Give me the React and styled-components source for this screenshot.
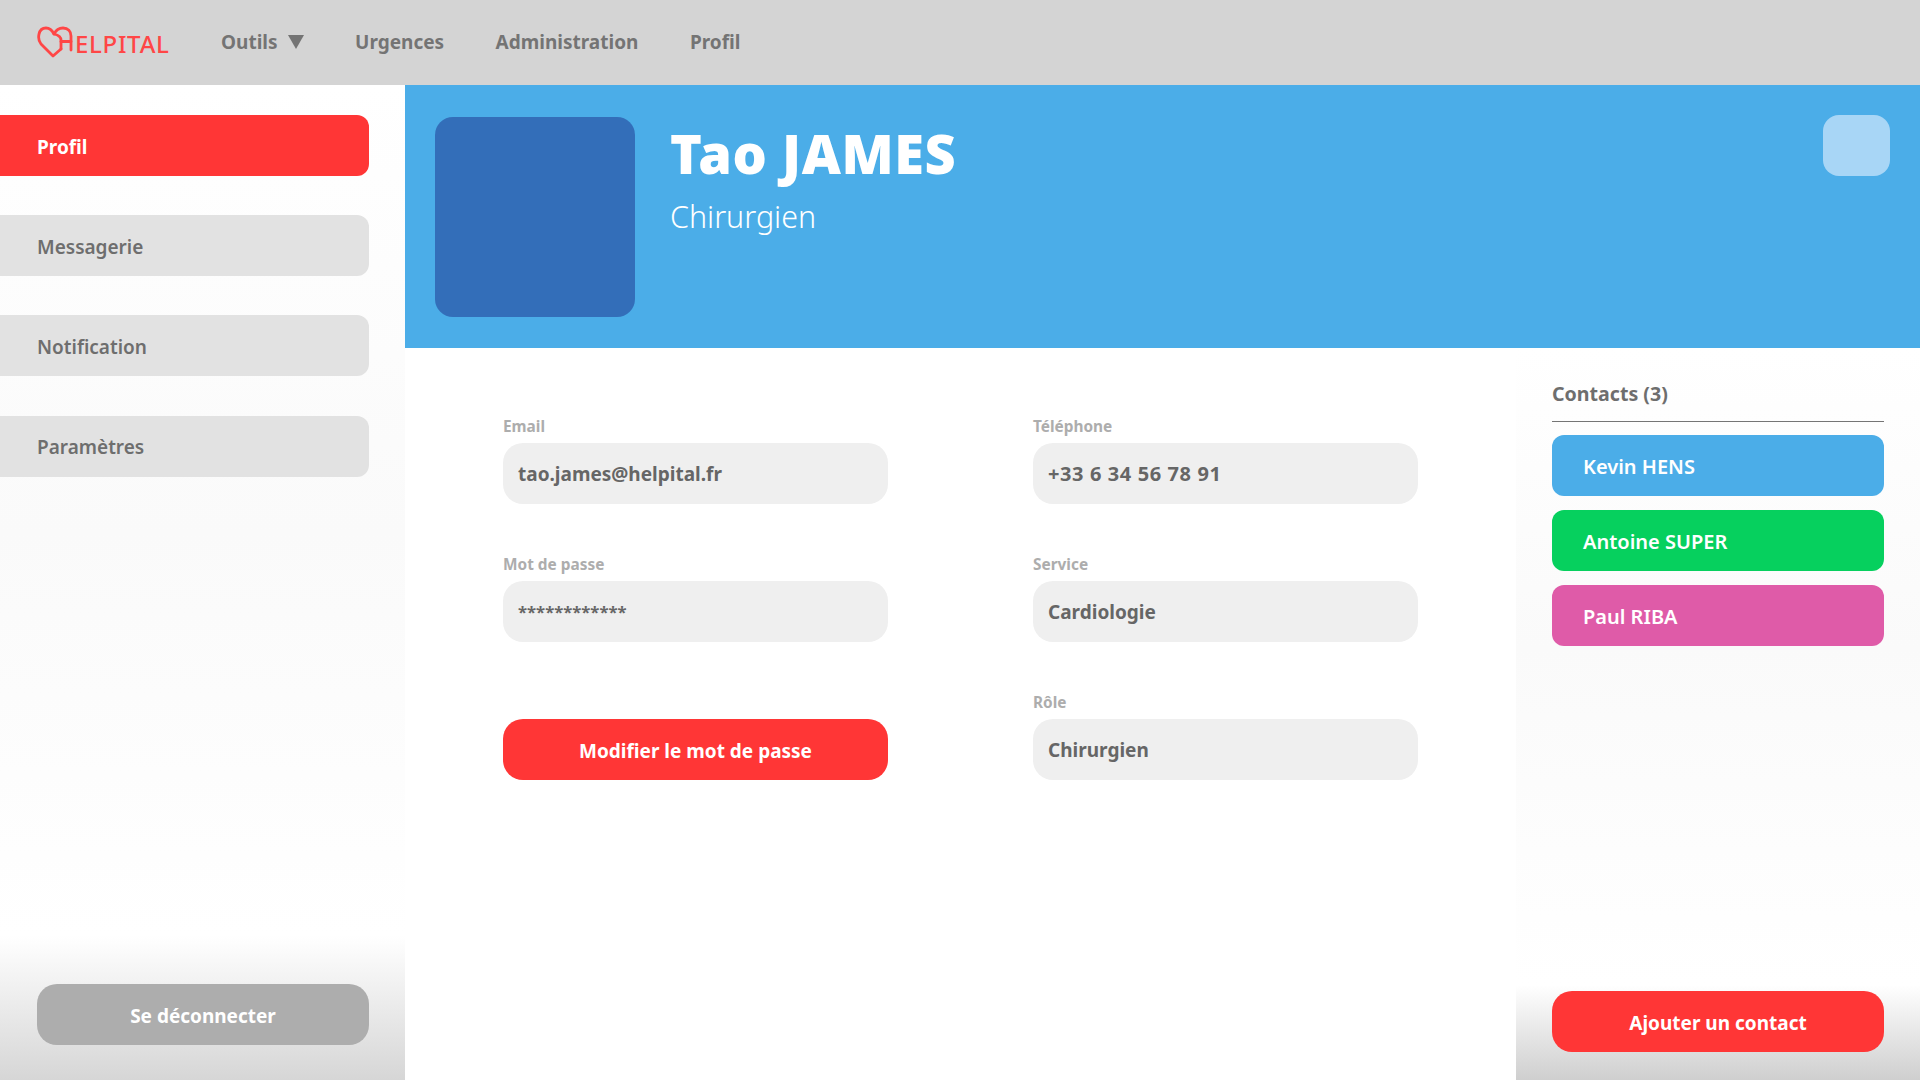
import React from 'react'
import styled, { createGlobalStyle } from 'styled-components'

const GlobalStyle = createGlobalStyle`
  html, body {
    margin: 0;
    padding: 0;
    background: #fff;
    font-family: "Noto Sans", "Open Sans", sans-serif;
  }
  * { box-sizing: border-box; }
`

const Page = styled.div`
  width: 1920px;
  height: 1080px;
  overflow: hidden;
  display: flex;
  flex-direction: column;
`

const Navbar = styled.header`
  height: 85px;
  flex: none;
  background: #d4d4d4;
  display: flex;
  align-items: center;
  padding-left: 37px;
`

const Logo = styled.div`
  width: 184px;
  display: flex;
  align-items: center;
  color: #ff4646;
  font-size: 24px;
  font-weight: 500;
  line-height: 1;
  letter-spacing: 0.7px;
`

const HeartMark = styled.svg`
  width: 36px;
  height: 32px;
  flex: none;
  margin-top: -2px;
`

const LogoText = styled.span`
  margin-top: 2px;
  margin-left: 2px;
`

const NavList = styled.nav`
  display: flex;
  align-items: center;
  gap: 51.5px;
  padding-bottom: 2px;
`

const NavLink = styled.span`
  display: flex;
  align-items: center;
  gap: 10px;
  color: #747474;
  font-size: 19px;
  font-weight: 700;
`

const Caret = styled.span`
  width: 0;
  height: 0;
  border-left: 8px solid transparent;
  border-right: 8px solid transparent;
  border-top: 14px solid #747474;
`

const Body = styled.div`
  flex: 1;
  display: flex;
  min-height: 0;
`

const Sidebar = styled.aside`
  width: 405px;
  flex: none;
  padding: 30px 36px 35px 0;
  display: flex;
  flex-direction: column;
  justify-content: space-between;
  background: linear-gradient(#ffffff 0, #fafafa 45%, #ffffff 85.5%, #d6d6d6 100%);
`

const SideMenu = styled.div`
  display: flex;
  flex-direction: column;
  gap: 39.2px;
`

const SideItem = styled.div`
  height: 61px;
  padding: 2px 0 0 37px;
  display: flex;
  align-items: center;
  border-radius: 0 12px 12px 0;
  font-size: 19px;
  font-weight: ${p => (p.$active ? 700 : 600)};
  color: ${p => (p.$active ? '#fff' : '#6e6e6e')};
  background: ${p => (p.$active ? '#ff3636' : '#e2e2e2')};
`

const PillButton = styled.button`
  width: 100%;
  height: 61px;
  padding: 2px 0 0;
  border: 0;
  border-radius: 20px;
  font-family: inherit;
  font-size: 19px;
  font-weight: 700;
  color: #fff;
  background: ${p => p.$color || '#ff3636'};
`

const LogoutRow = styled.div`
  padding-left: 37px;
`

const Main = styled.main`
  flex: 1;
  min-width: 0;
  display: flex;
  flex-direction: column;
`

const Hero = styled.section`
  height: 263px;
  flex: none;
  background: #4badE8;
  padding: 32px 30px 0 30px;
  display: flex;
  align-items: flex-start;
`

const Avatar = styled.div`
  width: 200px;
  height: 200px;
  flex: none;
  border-radius: 18px;
  background: #336eb9;
`

const HeroText = styled.div`
  margin: 6px 0 0 35px;
  flex: 1;
`

const Name = styled.h1`
  margin: 0;
  color: #fff;
  font-size: 54px;
  line-height: 60px;
  font-weight: 900;
  letter-spacing: 0.6px;
`

const Job = styled.div`
  margin-top: 14px;
  color: #fff;
  font-size: 30.4px;
  line-height: 40px;
  font-weight: 300;
`

const SquareButton = styled.div`
  width: 67px;
  height: 61px;
  margin-top: -2px;
  border-radius: 16px;
  background: #a8d6f6;
`

const Content = styled.div`
  flex: 1;
  display: flex;
  min-height: 0;
`

const FormArea = styled.div`
  flex: 1;
  padding: 69px 0 0 98px;
`

const FormGrid = styled.div`
  display: grid;
  grid-template-columns: 385px 385px;
  column-gap: 145px;
  row-gap: 51px;
`

const Field = styled.div`
  display: flex;
  flex-direction: column;
  gap: 7px;
`

const FieldLabel = styled.label`
  padding-top: 1px;
  color: #adadad;
  font-size: 15.4px;
  line-height: 18px;
  font-weight: 700;
`

const FieldBox = styled.div`
  height: 61px;
  padding-left: 15px;
  display: flex;
  align-items: center;
  border-radius: 20px;
  background: #efefef;
  color: #666;
  font-size: ${p => p.$size || 19}px;
  letter-spacing: ${p => p.$spacing || 0}px;
  font-weight: 700;
`

const ButtonCell = styled.div`
  display: flex;
  align-items: flex-end;
`

const ContactsPanel = styled.aside`
  width: 404px;
  flex: none;
  padding: 30px 36px 28px;
  display: flex;
  flex-direction: column;
  background: linear-gradient(#ffffff 0, #fafafa 41%, #ffffff 87%, #cfcfcf 100%);
`

const ContactsTitle = styled.div`
  height: 44px;
  border-bottom: 1px solid #757575;
  color: #6e6e6e;
  font-size: 19.6px;
  line-height: 32px;
  font-weight: 700;
`

const ContactList = styled.div`
  margin-top: 13px;
  flex: 1;
  display: flex;
  flex-direction: column;
  gap: 14px;
`

const ContactCard = styled.div`
  height: 61px;
  padding: 2px 0 0 31px;
  display: flex;
  align-items: center;
  border-radius: 12px;
  background: ${p => p.$color};
  color: #fff;
  font-size: 20px;
  font-weight: 600;
`

const fields = {
  email: { label: 'Email', value: 'tao.james@helpital.fr' },
  phone: { label: 'Téléphone', value: '+33 6 34 56 78 91', size: 20, spacing: 0.6 },
  password: { label: 'Mot de passe', value: '************', size: 16.7 },
  service: { label: 'Service', value: 'Cardiologie' },
  role: { label: 'Rôle', value: 'Chirurgien' },
}

const contacts = [
  { name: 'Kevin HENS', color: '#4badE8' },
  { name: 'Antoine SUPER', color: '#06d05e' },
  { name: 'Paul RIBA', color: '#df5ba8' },
]

const FormField = ({ label, value, size, spacing }) => (
  <Field>
    <FieldLabel>{label}</FieldLabel>
    <FieldBox $size={size} $spacing={spacing}>{value}</FieldBox>
  </Field>
)

const App = () => {
  return (
    <Page>
      <GlobalStyle />
      <Navbar>
        <Logo>
          <HeartMark viewBox="0 0 36 32" fill="none" stroke="#ff4646" strokeWidth="2.8" strokeLinejoin="round" strokeLinecap="round">
            <path d="M24 23 L16 30 L4 18 C0 13 1 2 9 2 C12.5 2 15 4 17 8 C19 4 22 2 26 2 C31 2 34 5 34 10 L34 24" />
            <path d="M24 23 L24 14 C24 11 21 9 17 8" />
            <path d="M24 15.5 L34 15.5" />
          </HeartMark>
          <LogoText>ELPITAL</LogoText>
        </Logo>
        <NavList>
          <NavLink>Outils <Caret /></NavLink>
          <NavLink>Urgences</NavLink>
          <NavLink>Administration</NavLink>
          <NavLink>Profil</NavLink>
        </NavList>
      </Navbar>
      <Body>
        <Sidebar>
          <SideMenu>
            <SideItem $active>Profil</SideItem>
            <SideItem>Messagerie</SideItem>
            <SideItem>Notification</SideItem>
            <SideItem>Paramètres</SideItem>
          </SideMenu>
          <LogoutRow>
            <PillButton $color="#adadad">Se déconnecter</PillButton>
          </LogoutRow>
        </Sidebar>
        <Main>
          <Hero>
            <Avatar />
            <HeroText>
              <Name>Tao JAMES</Name>
              <Job>Chirurgien</Job>
            </HeroText>
            <SquareButton />
          </Hero>
          <Content>
            <FormArea>
              <FormGrid>
                <FormField {...fields.email} />
                <FormField {...fields.phone} />
                <FormField {...fields.password} />
                <FormField {...fields.service} />
                <ButtonCell>
                  <PillButton>Modifier le mot de passe</PillButton>
                </ButtonCell>
                <FormField {...fields.role} />
              </FormGrid>
            </FormArea>
            <ContactsPanel>
              <ContactsTitle>Contacts (3)</ContactsTitle>
              <ContactList>
                {contacts.map(contact => (
                  <ContactCard key={contact.name} $color={contact.color}>{contact.name}</ContactCard>
                ))}
              </ContactList>
              <PillButton>Ajouter un contact</PillButton>
            </ContactsPanel>
          </Content>
        </Main>
      </Body>
    </Page>
  )
}

export default App
